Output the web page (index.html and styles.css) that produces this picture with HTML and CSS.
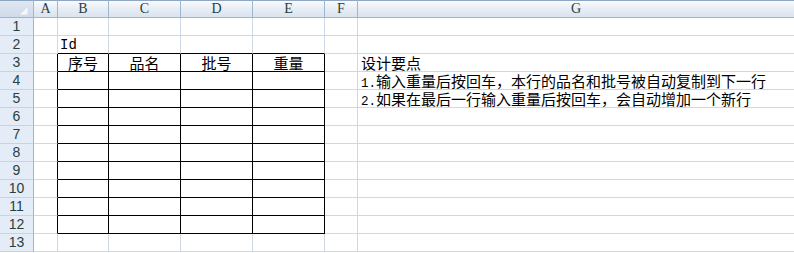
FILE: index.html
```html
<!DOCTYPE html>
<html>
<head>
<meta charset="utf-8">
<link rel="stylesheet" href="styles.css">
</head>
<body>
<div class="sheet">
  <div class="corner"><svg class="tri" width="9" height="9" viewBox="0 0 9 9"><polygon points="9,0 9,9 0,9" fill="#f4f7fb" stroke="#c9d3e0" stroke-width="0.6"/></svg></div>
  <div class="ch">A</div><div class="ch">B</div><div class="ch">C</div><div class="ch">D</div><div class="ch">E</div><div class="ch">F</div><div class="ch last">G</div>

  <div class="rh">1</div><div class="c"></div><div class="c"></div><div class="c"></div><div class="c"></div><div class="c"></div><div class="c"></div><div class="c g"></div>

  <div class="rh">2</div><div class="c"></div><div class="c bb id">Id</div><div class="c bb"></div><div class="c bb"></div><div class="c bb"></div><div class="c"></div><div class="c g"></div>

  <div class="rh">3</div><div class="c br"></div><div class="c bb br hd">序号</div><div class="c bb br hd">品名</div><div class="c bb br hd">批号</div><div class="c bb br hd">重量</div><div class="c"></div><div class="c g txt">设计要点</div>

  <div class="rh">4</div><div class="c br"></div><div class="c bb br"></div><div class="c bb br"></div><div class="c bb br"></div><div class="c bb br"></div><div class="c"></div><div class="c g txt"><span class="num">1.</span>输入重量后按回车，本行的品名和批号被自动复制到下一行</div>

  <div class="rh">5</div><div class="c br"></div><div class="c bb br"></div><div class="c bb br"></div><div class="c bb br"></div><div class="c bb br"></div><div class="c"></div><div class="c g txt"><span class="num">2.</span>如果在最后一行输入重量后按回车，会自动增加一个新行</div>

  <div class="rh">6</div><div class="c br"></div><div class="c bb br"></div><div class="c bb br"></div><div class="c bb br"></div><div class="c bb br"></div><div class="c"></div><div class="c g"></div>

  <div class="rh">7</div><div class="c br"></div><div class="c bb br"></div><div class="c bb br"></div><div class="c bb br"></div><div class="c bb br"></div><div class="c"></div><div class="c g"></div>

  <div class="rh">8</div><div class="c br"></div><div class="c bb br"></div><div class="c bb br"></div><div class="c bb br"></div><div class="c bb br"></div><div class="c"></div><div class="c g"></div>

  <div class="rh">9</div><div class="c br"></div><div class="c bb br"></div><div class="c bb br"></div><div class="c bb br"></div><div class="c bb br"></div><div class="c"></div><div class="c g"></div>

  <div class="rh">10</div><div class="c br"></div><div class="c bb br"></div><div class="c bb br"></div><div class="c bb br"></div><div class="c bb br"></div><div class="c"></div><div class="c g"></div>

  <div class="rh">11</div><div class="c br"></div><div class="c bb br"></div><div class="c bb br"></div><div class="c bb br"></div><div class="c bb br"></div><div class="c"></div><div class="c g"></div>

  <div class="rh">12</div><div class="c br"></div><div class="c bb br"></div><div class="c bb br"></div><div class="c bb br"></div><div class="c bb br"></div><div class="c"></div><div class="c g"></div>

  <div class="rh">13</div><div class="c"></div><div class="c"></div><div class="c"></div><div class="c"></div><div class="c"></div><div class="c"></div><div class="c g"></div>
</div>
</body>
</html>
```

FILE: styles.css
```css
html, body {
  margin: 0;
  padding: 0;
  background: #ffffff;
  overflow: hidden;
}

.sheet {
  display: grid;
  grid-template-columns: 34px 24px 51px 72px 72px 72px 33px 436px;
  grid-auto-rows: 18px;
  width: 794px;
  font-family: "Noto Sans CJK SC", "Liberation Sans", sans-serif;
}

.sheet > div {
  box-sizing: border-box;
  white-space: nowrap;
}

.corner {
  position: relative;
  background: linear-gradient(#dfe7f1, #cfdbea);
  border-top: 1px solid #8ea6c2;
  border-right: 1px solid #9eb6ce;
  border-bottom: 1px solid #9eb6ce;
}

.tri {
  position: absolute;
  right: 5px;
  bottom: 2px;
}

.ch {
  background: linear-gradient(#f8fafd 0%, #e9eef6 45%, #dae3ee 100%);
  border-top: 1px solid #8ea6c2;
  border-right: 1px solid #9eb6ce;
  border-bottom: 1px solid #9eb6ce;
  color: #27413e;
  font-family: "Liberation Serif", serif;
  font-size: 14px;
  line-height: 16px;
  text-align: center;
}

.ch.last {
  border-right: none;
}

.rh {
  background: #e4ecf7;
  border-right: 1px solid #9eb6ce;
  border-bottom: 1px solid #c5d3e4;
  color: #27413e;
  font-family: "Liberation Sans", sans-serif;
  font-size: 14px;
  line-height: 17px;
  text-align: center;
}

.c {
  border-right: 1px solid #d0d7e5;
  border-bottom: 1px solid #d0d7e5;
  color: #000000;
  font-size: 14.5px;
  line-height: 17px;
}

.c.g {
  border-right: none;
}

.c.bb {
  border-bottom-color: #000000;
}

.c.br {
  border-right-color: #000000;
}

.hd {
  text-align: center;
  font-size: 15px;
}

.txt {
  padding-left: 3px;
  font-size: 15px;
}

.num {
  font-family: "Liberation Mono", monospace;
  font-size: 12.5px;
}

.id {
  padding-left: 2px;
  padding-top: 2px;
  font-family: "Liberation Mono", monospace;
  font-size: 14px;
  line-height: 15px;
}
```
